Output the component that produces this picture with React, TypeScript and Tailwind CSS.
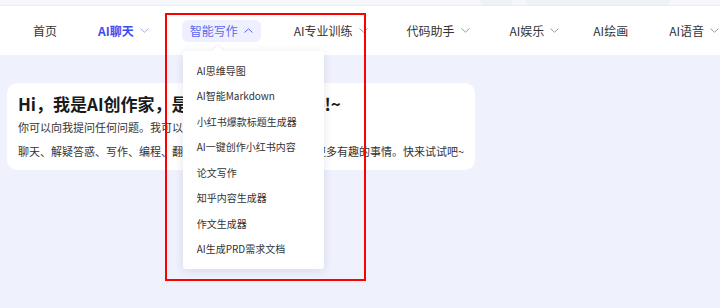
const navItems = [
  { label: "首页", arrow: false },
  { label: "AI聊天", arrow: true, active: true },
  { label: "智能写作", arrow: true, open: true },
  { label: "AI专业训练", arrow: true },
  { label: "代码助手", arrow: true, shift: "-ml-[2px]" },
  { label: "AI娱乐", arrow: true, shift: "-ml-[1px]" },
  { label: "AI绘画", arrow: false, shift: "-ml-[7px]" },
  { label: "AI语音", arrow: true },
];

const writingTools = [
  "AI思维导图",
  "AI智能Markdown",
  "小红书爆款标题生成器",
  "AI一键创作小红书内容",
  "论文写作",
  "知乎内容生成器",
  "作文生成器",
  "AI生成PRD需求文档",
];

function Chevron({ up, className }: { up?: boolean; className?: string }) {
  return (
    <svg width="9" height="5" viewBox="0 0 9 5" fill="none" className={className}>
      <path
        d={up ? "M0.5 4.5L4.5 0.8L8.5 4.5" : "M0.5 0.5L4.5 4.2L8.5 0.5"}
        stroke="currentColor"
        strokeWidth="1"
      />
    </svg>
  );
}

function NavItem({ item }: { item: (typeof navItems)[number] }) {
  if (item.open) {
    return (
      <div className="relative">
        <div className="flex items-center gap-[6px] h-[22px] px-2 rounded-md bg-[#eef0ff] text-[#5a68f0]">
          <span>{item.label}</span>
          <Chevron up />
        </div>
        {/* dropdown */}
        <div className="absolute left-[1px] top-[31px] w-[141px] py-[7px] bg-white rounded-[3px] shadow-[0_2px_10px_rgba(30,40,90,0.12)] z-10">
          <div className="absolute -top-[4px] left-[31px] w-2 h-2 bg-white rotate-45 shadow-[-1px_-1px_2px_rgba(30,40,90,0.06)]" />
          {writingTools.map((t) => (
            <div
              key={t}
              className="h-[25.5px] flex items-center pl-[14px] text-[10px] text-[#333]"
            >
              {t}
            </div>
          ))}
        </div>
      </div>
    );
  }
  return (
    <div
      className={`flex items-center gap-[6px] h-[22px] px-2 ${item.shift ?? ""} ${
        item.active ? "text-[#3d4df2] font-bold" : "text-[#333]"
      }`}
    >
      <span>{item.label}</span>
      {item.arrow && (
        <Chevron className={item.active ? "text-[#a3abd6]" : "text-[#9a9a9a]"} />
      )}
    </div>
  );
}

export default function App() {
  return (
    <div
      className="relative w-[720px] h-[308px] overflow-hidden bg-[#eff1fd]"
      style={{ fontFamily: '"Noto Sans CJK SC", "Noto Sans", sans-serif' }}
    >
      {/* top strip */}
      <div className="h-[6px] bg-[#f5f7fa] border-b border-[#e8ebf0] flex">
        <div className="ml-[480px] w-[33px] h-[5px] rounded-b-md bg-[#edf1f8]" />
        <div className="ml-[12px] w-[145px] h-[5px] rounded-b-md bg-[#edf1f8]" />
      </div>

      {/* nav */}
      <div className="h-[49px] bg-white flex items-center pl-[25px] gap-[25px] text-[12px] whitespace-nowrap">
        {navItems.map((item) => (
          <NavItem key={item.label} item={item} />
        ))}
      </div>

      {/* intro card */}
      <div className="mt-[28px] ml-[7px] w-[468px] h-[87px] bg-white rounded-[10px] pl-[11px] pt-[9px]">
        <div className="text-[17px] leading-[24px] font-bold text-[#1a1a1a] whitespace-nowrap">
          Hi，我是AI创作家，是你的智能写作助手!~
        </div>
        <div className="text-[11px] leading-[16px] text-[#333] mt-[3px] whitespace-nowrap">
          你可以向我提问任何问题。我可以帮你完成各种任务，包括
        </div>
        <div className="text-[11px] leading-[16px] text-[#333] mt-[8px] whitespace-nowrap">
          聊天、解疑答惑、写作、编程、翻译、总结、创作、绘画以及更多有趣的事情。快来试试吧~
        </div>
      </div>

      {/* annotation */}
      <div className="absolute left-[165px] top-[13px] w-[201px] h-[268px] border-2 border-[#ff0000] pointer-events-none z-20" />
    </div>
  );
}
